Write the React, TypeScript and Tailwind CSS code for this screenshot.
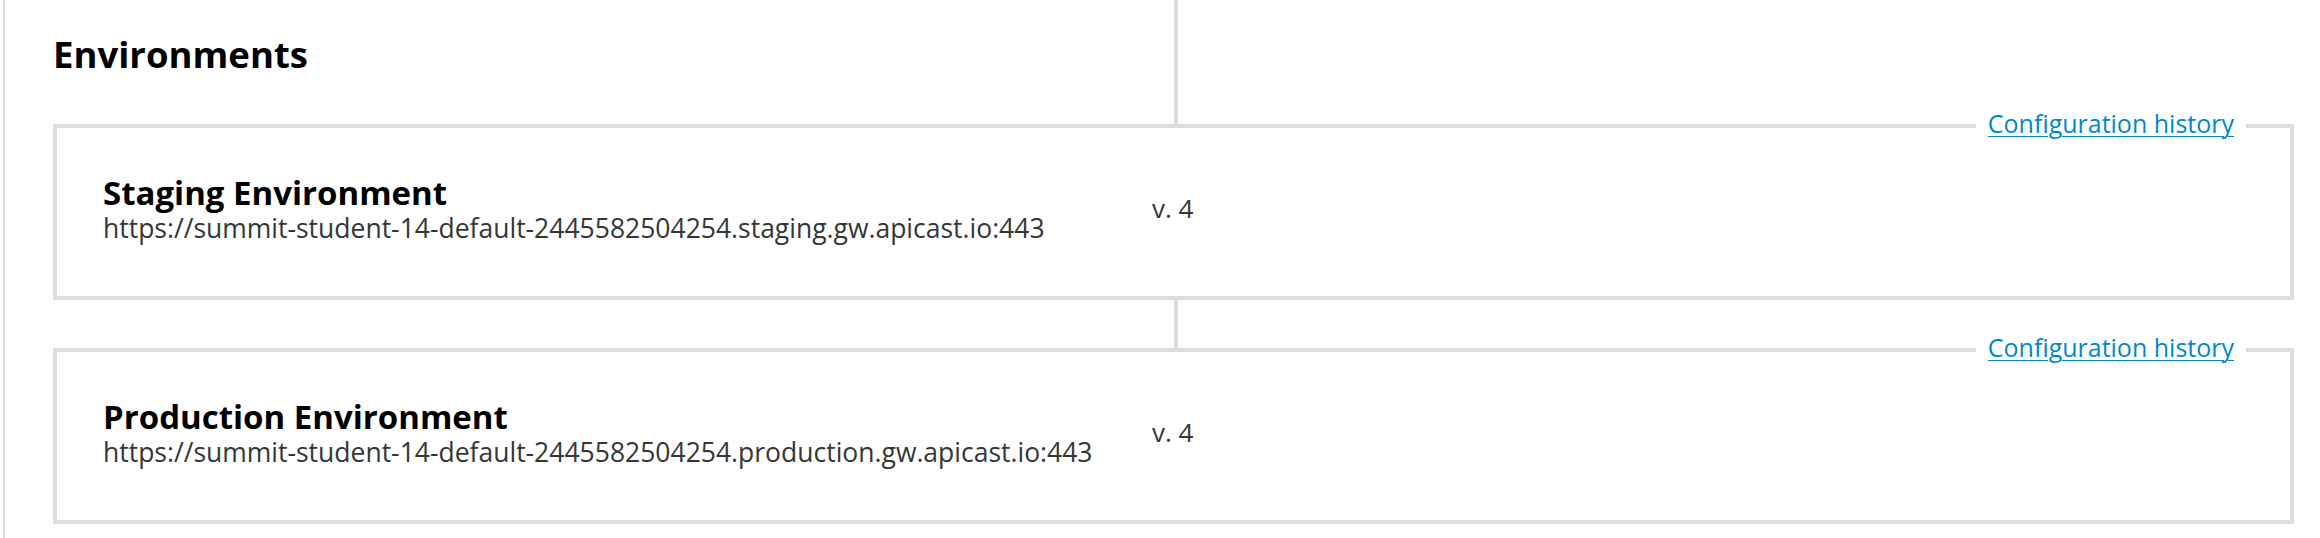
import React from "react";

const environments = [
  {
    name: "Staging Environment",
    url: "https://summit-student-14-default-2445582504254.staging.gw.apicast.io:443",
    version: "v. 4",
  },
  {
    name: "Production Environment",
    url: "https://summit-student-14-default-2445582504254.production.gw.apicast.io:443",
    version: "v. 4",
  },
];

const EnvironmentBox = ({ env, first }: { env: (typeof environments)[number]; first: boolean }) => (
  <div
    className={`relative z-10 h-[176px] border-4 border-[#dddddd] bg-white ${first ? "" : "mt-12"}`}
  >
    <a
      href="#"
      className="absolute right-[44px] top-[-17px] bg-white px-3 text-[25px] leading-[25px] text-[#0088ce] underline underline-offset-[3px] decoration-1"
    >
      Configuration history
    </a>
    <div className="flex pt-[47px] pl-[46px]">
      <div className="w-[1049px]">
        <h2 className="text-[33px] leading-[36px] font-bold text-black">{env.name}</h2>
        <p className="text-[26.5px] leading-[34px] text-[#363636]">{env.url}</p>
      </div>
      <div className="mt-[16px] text-[26px] leading-[34px] text-[#363636]">{env.version}</div>
    </div>
  </div>
);

export default function App() {
  return (
    <div className="h-[538px] w-[2320px] overflow-hidden bg-white font-['Open_Sans',sans-serif]">
      <div className="relative ml-[3px] h-full border-l-2 border-[#dddddd] pl-[48px] pr-[26px]">
        {/* connector line between the environment boxes */}
        <div className="absolute left-[1169px] top-0 h-[348px] w-[4px] bg-[#dddddd]" />
        <h1 className="relative pt-[32px] text-[36.5px] leading-[44px] font-bold text-black">Environments</h1>
        <div className="mt-12">
          {environments.map((env, i) => (
            <EnvironmentBox key={env.name} env={env} first={i === 0} />
          ))}
        </div>
      </div>
    </div>
  );
}
